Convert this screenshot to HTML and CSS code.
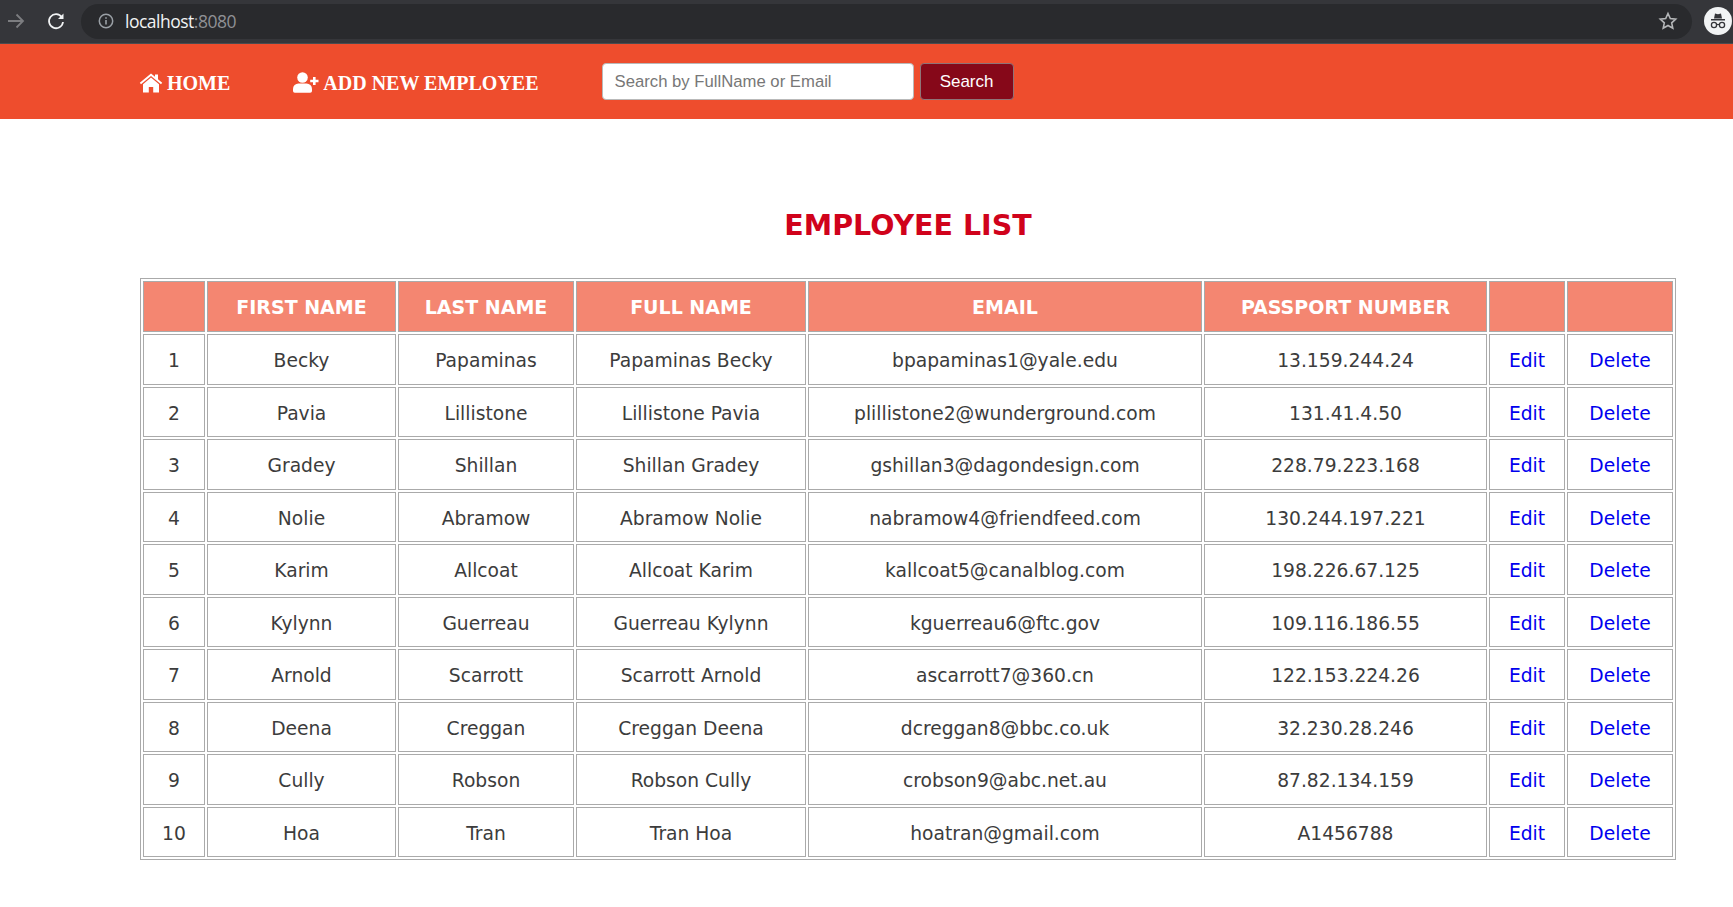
FILE: index.html
```html
<!DOCTYPE html>
<html lang="en">
<head>
<meta charset="utf-8">
<title>Employee List</title>
<link rel="stylesheet" href="styles.css">
</head>
<body>
<div class="chrome">
  <svg class="ch-back" width="20" height="20" viewBox="0 0 20 20"><path d="M2 10h15M10.500 3.500 17 10l-6.500 6.500" fill="none" stroke="#7c7d80" stroke-width="1.800"/></svg>
  <svg class="ch-reload" width="20" height="20" viewBox="0 0 20 20"><path d="M15.800 6.200A7 7 0 1 0 17 11" fill="none" stroke="#f1f3f4" stroke-width="1.800"/><path d="M17.500 2.500v5.500H12z" fill="#f1f3f4"/></svg>
  <div class="omnibox">
    <svg class="ch-info" width="16" height="16" viewBox="0 0 16 16"><circle cx="8" cy="8" r="6.700" fill="none" stroke="#9aa0a6" stroke-width="1.500"/><path d="M8 7v4.500M8 4.300v1.500" stroke="#9aa0a6" stroke-width="1.600"/></svg>
    <span class="host">localhost<span class="port">:8080</span></span>
    <svg class="ch-star" width="20" height="20" viewBox="0 0 20 20"><path d="m10 2.500 2.300 5 5.400.6-4 3.700 1.100 5.400-4.800-2.700-4.800 2.700 1.100-5.400-4-3.700 5.400-.6z" fill="none" stroke="#b4b6b8" stroke-width="1.600"/></svg>
  </div>
  <div class="avatar">
    <svg width="26" height="26" viewBox="0 0 26 26"><path d="M9 10.500 10 5.500l3 .7 3-.7 1 5zM6 11h14v1.400H6z" fill="#35363a"/><circle cx="9" cy="17" r="2.600" fill="none" stroke="#35363a" stroke-width="1.300"/><circle cx="17" cy="17" r="2.600" fill="none" stroke="#35363a" stroke-width="1.300"/><path d="M11.500 16.500h3" stroke="#35363a" stroke-width="1.200"/></svg>
  </div>
</div>

<nav class="navbar">
  <a class="nav-link" href="#">
    <svg class="nav-icon" width="24" height="20" viewBox="0 0 24 20"><path d="M12 .5 0.800 9.800l1.200 1.500L12 3l10 8.300 1.200-1.500-4.200-3.500V1.500h-3v2.300z"/><path d="M12 4.500 4 11.200V19.500h5.800v-5.500h4.400v5.500H20v-8.300z"/></svg>
    HOME
  </a>
  <a class="nav-link nav-add" href="#">
    <svg class="nav-icon" width="26" height="21" viewBox="0 0 26 21"><circle cx="9.500" cy="5.500" r="5.300"/><path d="M5.500 11.500h8a5.500 5.500 0 0 1 5.500 5.500v2a1.800 1.800 0 0 1-1.800 1.800H1.800A1.800 1.800 0 0 1 0 19v-2a5.500 5.500 0 0 1 5.500-5.500z"/><path d="M20 5h2.600v2.800h2.900v2.500h-2.900v2.800H20v-2.800h-2.800V7.800H20z"/></svg>
    ADD NEW EMPLOYEE
  </a>
  <form class="search">
    <input class="search-input" type="text" placeholder="Search by FullName or Email">
    <button class="search-btn" type="button">Search</button>
  </form>
</nav>

<main class="content">
  <h1 class="title">EMPLOYEE LIST</h1>
  <table class="emp">
    <colgroup>
      <col class="c1"><col class="c2"><col class="c3"><col class="c4"><col class="c5"><col class="c6"><col class="c7"><col class="c8">
    </colgroup>
    <thead>
      <tr><th></th><th>FIRST NAME</th><th>LAST NAME</th><th>FULL NAME</th><th>EMAIL</th><th>PASSPORT NUMBER</th><th></th><th></th></tr>
    </thead>
    <tbody>
      <tr><td>1</td><td>Becky</td><td>Papaminas</td><td>Papaminas Becky</td><td>bpapaminas1@yale.edu</td><td>13.159.244.24</td><td><a href="#">Edit</a></td><td><a href="#">Delete</a></td></tr>
      <tr><td>2</td><td>Pavia</td><td>Lillistone</td><td>Lillistone Pavia</td><td>plillistone2@wunderground.com</td><td>131.41.4.50</td><td><a href="#">Edit</a></td><td><a href="#">Delete</a></td></tr>
      <tr><td>3</td><td>Gradey</td><td>Shillan</td><td>Shillan Gradey</td><td>gshillan3@dagondesign.com</td><td>228.79.223.168</td><td><a href="#">Edit</a></td><td><a href="#">Delete</a></td></tr>
      <tr><td>4</td><td>Nolie</td><td>Abramow</td><td>Abramow Nolie</td><td>nabramow4@friendfeed.com</td><td>130.244.197.221</td><td><a href="#">Edit</a></td><td><a href="#">Delete</a></td></tr>
      <tr><td>5</td><td>Karim</td><td>Allcoat</td><td>Allcoat Karim</td><td>kallcoat5@canalblog.com</td><td>198.226.67.125</td><td><a href="#">Edit</a></td><td><a href="#">Delete</a></td></tr>
      <tr><td>6</td><td>Kylynn</td><td>Guerreau</td><td>Guerreau Kylynn</td><td>kguerreau6@ftc.gov</td><td>109.116.186.55</td><td><a href="#">Edit</a></td><td><a href="#">Delete</a></td></tr>
      <tr><td>7</td><td>Arnold</td><td>Scarrott</td><td>Scarrott Arnold</td><td>ascarrott7@360.cn</td><td>122.153.224.26</td><td><a href="#">Edit</a></td><td><a href="#">Delete</a></td></tr>
      <tr><td>8</td><td>Deena</td><td>Creggan</td><td>Creggan Deena</td><td>dcreggan8@bbc.co.uk</td><td>32.230.28.246</td><td><a href="#">Edit</a></td><td><a href="#">Delete</a></td></tr>
      <tr><td>9</td><td>Cully</td><td>Robson</td><td>Robson Cully</td><td>crobson9@abc.net.au</td><td>87.82.134.159</td><td><a href="#">Edit</a></td><td><a href="#">Delete</a></td></tr>
      <tr><td>10</td><td>Hoa</td><td>Tran</td><td>Tran Hoa</td><td>hoatran@gmail.com</td><td>A1456788</td><td><a href="#">Edit</a></td><td><a href="#">Delete</a></td></tr>
    </tbody>
  </table>
</main>
</body>
</html>
```
FILE: styles.css
```css
* { box-sizing: border-box; }
html, body { margin: 0; padding: 0; background: #fff; overflow: hidden; height: 907px; }

.chrome {
  height: 44px;
  background: #35363a;
  border-bottom: 1px solid #4a4b4f;
  display: flex;
  align-items: center;
  padding: 0 0 1px 6px;
}
.ch-back { flex: none; }
.ch-reload { flex: none; margin-left: 20px; }
.omnibox {
  flex: none;
  width: 1611px;
  height: 35px;
  margin-left: 15px;
  background: #292a2d;
  border-radius: 18px;
  display: flex;
  align-items: center;
  padding: 0 14px 0 17px;
}
.ch-info { flex: none; }
.host {
  margin-left: 11px;
  font: 17.500px/20px "Open Sans", "Liberation Sans", sans-serif;
  letter-spacing: -0.5px;
  color: #f1f3f4;
}
.port { color: #8f9195; }
.ch-star { margin-left: auto; }
.avatar {
  flex: none;
  width: 28px;
  height: 28px;
  margin-left: 12px;
  border-radius: 50%;
  background: #f1f3f4;
  display: flex;
  align-items: center;
  justify-content: center;
}

.navbar {
  height: 75px;
  background: #ee4d2d;
  display: flex;
  align-items: center;
  padding: 0 0 0 139px;
}
.nav-link {
  display: flex;
  align-items: center;
  gap: 4px;
  color: #fff;
  text-decoration: none;
  font: bold 20px/24px "Liberation Serif", "Times New Roman", serif;
  padding-top: 2px;
}
.nav-icon { fill: #fff; flex: none; }
.nav-add { margin-left: 63px; }
.search { display: flex; gap: 6px; margin-left: 63px; margin-bottom: 1px; }
.search-input {
  width: 312px;
  height: 37px;
  border: 1px solid #b9b9b9;
  border-radius: 4px;
  padding: 2px 12px 0;
  background: #fff;
  font: 16.700px "Liberation Sans", Arial, sans-serif;
  color: #333;
}
.search-input::placeholder { color: #777; opacity: 1; }
.search-btn {
  width: 94px;
  height: 37px;
  padding: 2px 0 0;
  border: 1px solid #8f7378;
  border-radius: 4px;
  background: #860819;
  color: #fff;
  font: 17px "Liberation Sans", Arial, sans-serif;
}

.content { padding: 85px 57px 0 140px; font-family: "DejaVu Sans", Verdana, sans-serif; }
.title {
  margin: 0 0 30px;
  text-align: center;
  font-size: 28.500px;
  line-height: 44px;
  font-weight: bold;
  color: #d0021b;
}
.emp {
  width: 1536px;
  table-layout: fixed;
  border: 1px solid #aaa;
  border-collapse: separate;
  border-spacing: 2px;
}
.c1 { width: 62px; }
.c2 { width: 189px; }
.c3 { width: 176px; }
.c4 { width: 230px; }
.c5 { width: 394px; }
.c6 { width: 283px; }
.c7 { width: 76px; }
.c8 { width: 106px; }
.emp th, .emp td { border: 1px solid #aaa; text-align: center; padding: 0; }
.emp th {
  height: 51px;
  background: #f48671;
  color: #fff;
  font-size: 19px;
  font-weight: bold;
}
.emp td { height: 50.500px; padding-top: 3px; color: #3c3c3c; font-size: 18.700px; }
.emp a { color: #0000ee; text-decoration: none; }
```
